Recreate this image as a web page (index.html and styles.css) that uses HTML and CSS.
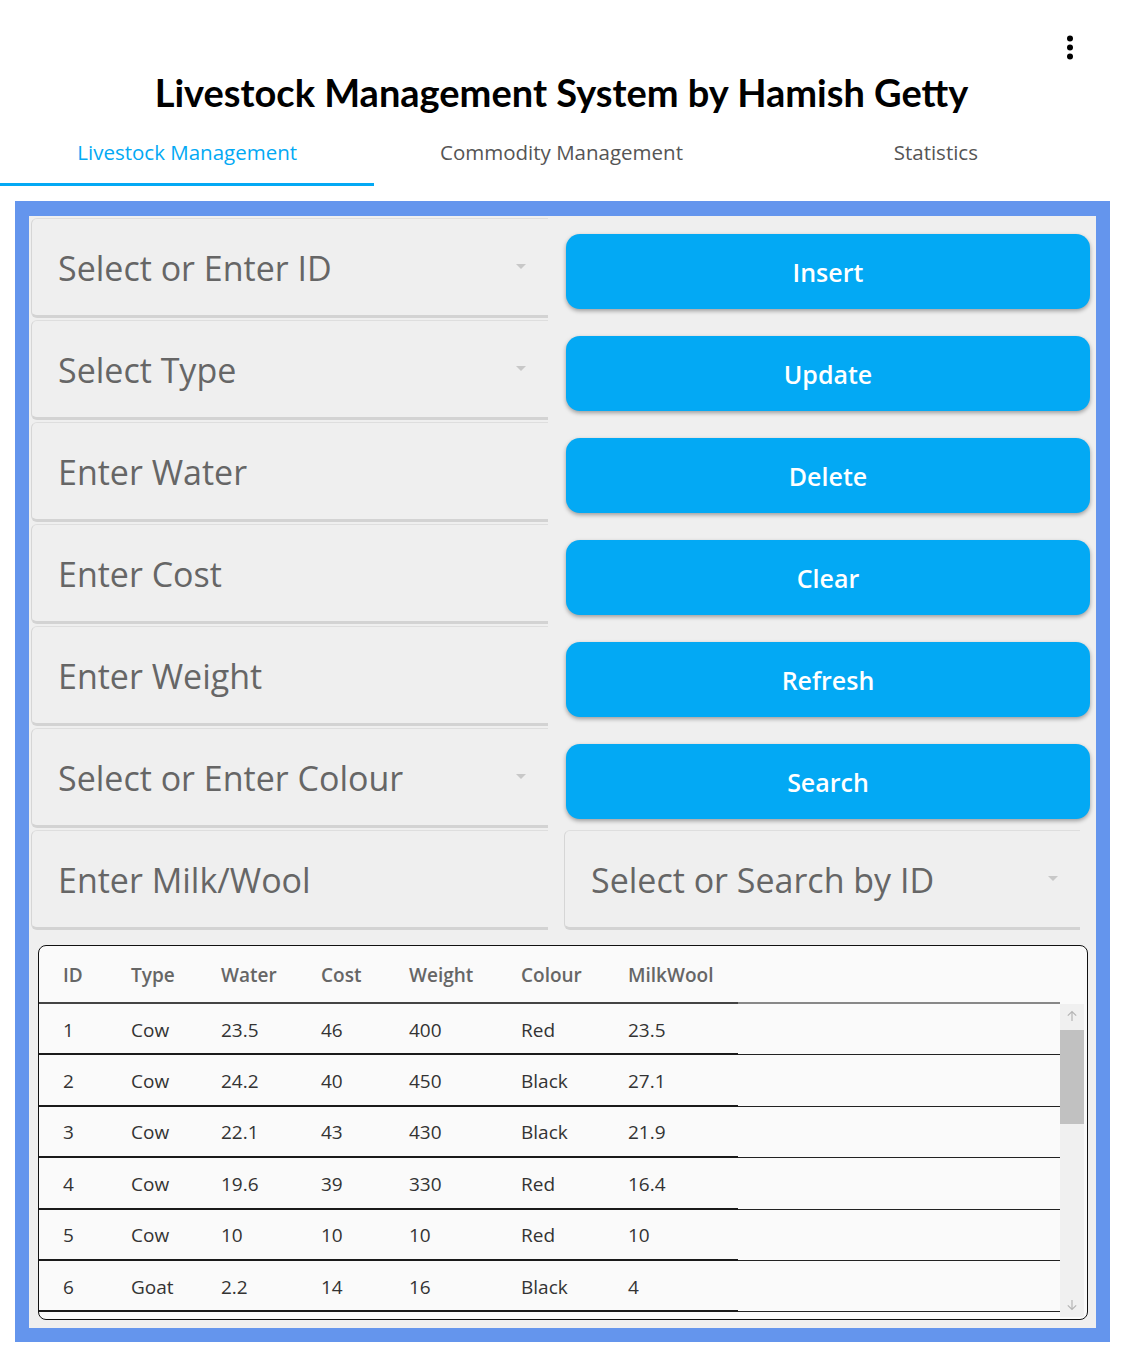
FILE: index.html
```html
<!DOCTYPE html>
<html>
<head>
<meta charset="utf-8">
<title>Livestock Management System</title>
<link rel="stylesheet" href="styles.css">
</head>
<body>
<div class="page">
  <header class="topbar">
    <button class="kebab" aria-label="More options">
      <svg width="8" height="26" viewBox="0 0 8 26"><circle cx="4" cy="3.5" r="3"/><circle cx="4" cy="12.5" r="3"/><circle cx="4" cy="21.5" r="3"/></svg>
    </button>
  </header>
  <h1 class="title">Livestock Management System by Hamish Getty</h1>
  <nav class="tabs">
    <div class="tab active">Livestock Management</div>
    <div class="tab">Commodity Management</div>
    <div class="tab">Statistics</div>
  </nav>
  <main class="frame">
    <div class="inner">
      <div class="form-grid">
        <div class="field picker"><span class="ph">Select or Enter ID</span><span class="caret"></span></div>
        <div class="btn-cell"><button class="btn">Insert</button></div>
        <div class="field picker"><span class="ph">Select Type</span><span class="caret"></span></div>
        <div class="btn-cell"><button class="btn">Update</button></div>
        <div class="field"><span class="ph">Enter Water</span></div>
        <div class="btn-cell"><button class="btn">Delete</button></div>
        <div class="field"><span class="ph">Enter Cost</span></div>
        <div class="btn-cell"><button class="btn">Clear</button></div>
        <div class="field"><span class="ph">Enter Weight</span></div>
        <div class="btn-cell"><button class="btn">Refresh</button></div>
        <div class="field picker"><span class="ph">Select or Enter Colour</span><span class="caret"></span></div>
        <div class="btn-cell"><button class="btn">Search</button></div>
        <div class="field"><span class="ph">Enter Milk/Wool</span></div>
        <div class="field picker search"><span class="ph">Select or Search by ID</span><span class="caret"></span></div>
      </div>
      <div class="table">
        <div class="thead">
          <div class="cols">
            <div>ID</div><div>Type</div><div>Water</div><div>Cost</div><div>Weight</div><div>Colour</div><div>MilkWool</div>
          </div>
          <div class="fill"></div>
        </div>
        <div class="tbody">
          <div class="rows">
            <div class="row"><div class="cols"><div>1</div><div>Cow</div><div>23.5</div><div>46</div><div>400</div><div>Red</div><div>23.5</div></div><div class="fill"></div></div>
            <div class="row"><div class="cols"><div>2</div><div>Cow</div><div>24.2</div><div>40</div><div>450</div><div>Black</div><div>27.1</div></div><div class="fill"></div></div>
            <div class="row"><div class="cols"><div>3</div><div>Cow</div><div>22.1</div><div>43</div><div>430</div><div>Black</div><div>21.9</div></div><div class="fill"></div></div>
            <div class="row"><div class="cols"><div>4</div><div>Cow</div><div>19.6</div><div>39</div><div>330</div><div>Red</div><div>16.4</div></div><div class="fill"></div></div>
            <div class="row"><div class="cols"><div>5</div><div>Cow</div><div>10</div><div>10</div><div>10</div><div>Red</div><div>10</div></div><div class="fill"></div></div>
            <div class="row"><div class="cols"><div>6</div><div>Goat</div><div>2.2</div><div>14</div><div>16</div><div>Black</div><div>4</div></div><div class="fill"></div></div>
          </div>
          <div class="scrollbar">
            <div class="sb-btn"><svg width="12" height="12" viewBox="0 0 12 12"><path d="M6 11V1.5M1.8 5.7L6 1.5l4.2 4.2" fill="none" stroke="#b5b5b5" stroke-width="1.2"/></svg></div>
            <div class="sb-thumb"></div>
            <div class="sb-track"></div>
            <div class="sb-btn"><svg width="12" height="12" viewBox="0 0 12 12"><path d="M6 1v9.5M1.8 6.3L6 10.5l4.2-4.2" fill="none" stroke="#b5b5b5" stroke-width="1.2"/></svg></div>
          </div>
        </div>
      </div>
    </div>
  </main>
</div>
</body>
</html>
```

FILE: styles.css
```css
* { box-sizing: border-box; }
html, body { margin: 0; padding: 0; background: #fff; }
body { font-family: "Open Sans", "Noto Sans", sans-serif; color: #333; }

.page { width: 1123px; }

.topbar { height: 70px; display: flex; justify-content: flex-end; align-items: flex-start; padding: 35px 49px 0 0; }
.kebab { border: 0; background: none; padding: 0; width: 8px; height: 26px; display: block; }
.kebab svg { display: block; fill: #000; }

.title { margin: 0; height: 44px; line-height: 44px; text-align: center; font-family: "Lato", "Open Sans", sans-serif; font-weight: 700; font-size: 38px; color: #000; }

.tabs { display: grid; grid-template-columns: 1fr 1fr 1fr; height: 72px; }
.tab { display: flex; align-items: center; justify-content: center; padding-top: 6px; font-size: 20.5px; font-weight: 500; color: #555; border-bottom: 3px solid transparent; }
.tab.active { color: #03a9f4; border-bottom-color: #03a9f4; }

.frame { margin: 15px 13px 0 15px; border: 14px solid #6495ed; border-top-width: 15px; background: #efefef; }
.inner { padding: 2px 2px 8px 2px; }

.form-grid { display: grid; grid-template-columns: 517px 530px; column-gap: 16px; grid-auto-rows: 102px; }

.field { height: 100px; display: flex; align-items: center; justify-content: space-between; padding: 2px 22px 0 26px; background: #efefef; border-left: 1px solid #d6d6d6; border-top: 1px solid #dedede; border-bottom: 3px solid #d3d3d3; border-radius: 6px 0 0 6px; }
.field.search { width: 516px; }
.ph { font-size: 34px; color: #666; white-space: nowrap; }
.caret { width: 0; height: 0; border-left: 5px solid transparent; border-right: 5px solid transparent; border-top: 5px solid #c8c8c8; margin-bottom: 4px; }

.btn-cell { padding: 16px 4px 0 2px; }
.btn { width: 100%; height: 75px; border: 0; border-radius: 14px; background: #03a9f4; color: #fff; font-family: inherit; font-size: 25px; font-weight: 600; box-shadow: 0 2px 4px rgba(0,0,0,0.35); }

.table { margin: 13px 6px 0 7px; height: 375px; border: 1.5px solid #111; border-radius: 8px; background: #fafafa; padding-right: 3px; overflow: hidden; display: flex; flex-direction: column; }

.cols { display: grid; grid-template-columns: 68px 90px 100px 88px 112px 107px 134px; }
.cols > div { padding-left: 24px; white-space: nowrap; }
.fill { flex: 1; }

.thead { display: flex; height: 58px; margin-right: 24px; flex: none; }
.thead .cols { align-items: center; font-weight: 600; font-size: 19px; color: #666; border-bottom: 2px solid #444; padding-top: 2px; }
.thead .fill { border-bottom: 2px solid #888; }

.tbody { flex: 1; display: flex; min-height: 0; }
.rows { flex: 1; overflow: hidden; }
.row { display: flex; height: 51.4px; }
.row .cols { align-items: center; font-size: 19px; color: #333; border-bottom: 2px solid #1a1a1a; padding-top: 2px; }
.row .fill { border-bottom: 1.5px solid #222; }

.scrollbar { width: 24px; display: flex; flex-direction: column; background: #f0f0f0; margin-bottom: 2px; }
.sb-btn { height: 24px; display: flex; align-items: center; justify-content: center; background: #f0f0f0; }
.sb-thumb { height: 94px; background: #c1c1c1; margin-top: 2px; }
.sb-track { flex: 1; }
```
